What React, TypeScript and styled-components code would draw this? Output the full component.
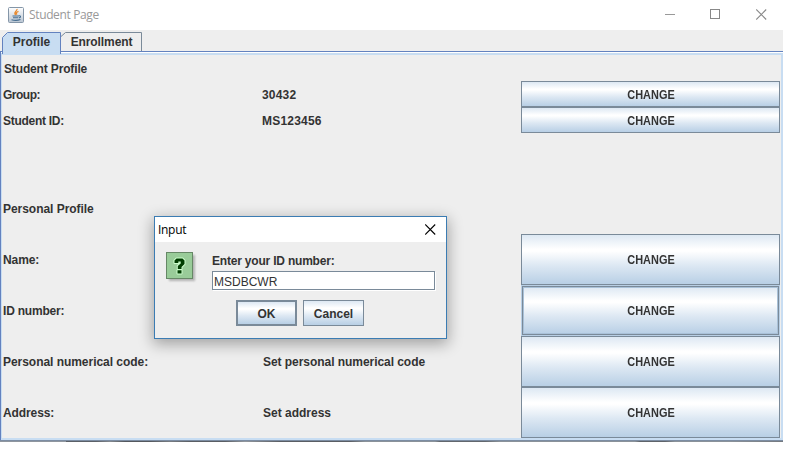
import React from 'react';
import styled, { createGlobalStyle, css } from 'styled-components';

const Global = createGlobalStyle`
  * { box-sizing: border-box; }
  body { margin: 0; background: #fff; overflow: hidden; }
`;

const Frame = styled.div`
  position: relative;
  width: 783px;
  height: 442px;
  display: flex;
  flex-direction: column;
  background: #eee;
  color: #333;
  font: bold 12px/16px "Liberation Sans", Arial, sans-serif;
  white-space: nowrap;
`;

const TitleBar = styled.header`
  height: 30px;
  flex: none;
  display: flex;
  align-items: center;
  padding: 0 16px 0 8px;
  background: #fff;
`;

const WindowTitle = styled.span`
  flex: 1;
  margin-left: 5px;
  color: #999;
  font: 12px/16px "Open Sans", "Noto Sans", sans-serif;
  letter-spacing: -0.36px;
`;

const WindowControls = styled.div`
  display: flex;
  gap: 35px;
  margin-top: -2px;
`;

const TabStrip = styled.nav`
  height: 21px;
  flex: none;
  display: flex;
  align-items: flex-end;
  padding-left: 2px;
`;

const TabBox = styled.div<{ $width: number }>`
  position: relative;
  width: ${p => p.$width}px;
  height: 20px;
  padding-top: 2px;
  text-align: center;
  line-height: 18px;
`;

const TabShape = styled.svg`
  position: absolute;
  left: 0;
  top: 0;
`;

const Label = styled.span<{ $track?: number }>`
  position: relative;
  letter-spacing: ${p => p.$track ?? 0}px;
`;

const CondensedLabel = styled.span`
  display: inline-block;
  transform: scaleX(0.91);
`;

const Panel = styled.main`
  height: 389px;
  flex: none;
  padding: 1px 0 0;
  border-top: 1px solid #6382bf;
  border-left: 1px solid #6382bf;
  background: #fff;
`;

const BottomEdge = styled.div`
  height: 2px;
  flex: none;
  border-top: 1px solid #7c8da3;
  background: linear-gradient(90deg, #8f969e 0 66px, #5b6067 66px 96px, #83888e 110px, #54585e 125px 150px,
    #777c82 170px, #5a5e64 190px 225px, #92979d 245px, #5a5e64 280px 350px, #8b9299 365px 435px,
    #62676d 440px 485px, #8b9299 500px 635px, #5f646a 640px 665px, #8b9299 675px 730px, #74797f 783px);
`;

const PanelBody = styled.div`
  height: 387px;
  padding: 0 1px 0 0;
  border: 2px solid #c8ddf2;
  border-left-width: 1px;
  background: #eee;
`;

const Rows = styled.div<{ $height: number }>`
  display: grid;
  grid-template-columns: 260px 259px 259px;
  grid-auto-rows: ${p => p.$height}px;
  align-items: center;
`;

const Spacer = styled.div`
  height: 50px;
`;

const Cell = styled.div<{ $indent?: number }>`
  padding-left: ${p => p.$indent ?? 1}px;
  padding-top: 1px;
`;

const metal = css`
  border: 1px solid #7a8a99;
  background: linear-gradient(#dde8f3 0%, #fff 29%, #fff 33%, #dde8f3 62%, #b8cfe5 100%);
`;

const ChangeButton = styled.button<{ $focused?: boolean }>`
  ${metal}
  width: 259px;
  height: 100%;
  padding: 1px 0 0 1px;
  color: #333;
  font: inherit;
  ${p => p.$focused && css`
    border-width: 2px;
    outline: 1px solid #b8cfe5;
    outline-offset: -1px;
    box-shadow: inset 0 0 0 1px #a9c1d8;
  `}
`;

const Dialog = styled.section`
  position: absolute;
  left: 154px;
  top: 216px;
  width: 293px;
  height: 123px;
  border: 1px solid #3b7cb3;
  background: #eee;
  box-shadow: 0 4px 14px 1px rgba(0, 0, 0, 0.33);
`;

const DialogTitle = styled.header`
  height: 25px;
  display: flex;
  align-items: center;
  justify-content: space-between;
  padding: 0 10px 0 3px;
  background: #fff;
  color: #000;
  font: 12px/16px "Open Sans", "Noto Sans", sans-serif;
  letter-spacing: -0.3px;
`;

const DialogMain = styled.div`
  display: grid;
  grid-template-columns: 46px 224px;
  padding: 10px 0 0 11px;
  height: 58px;
`;

const Prompt = styled.div`
  display: flex;
  flex-direction: column;
  gap: 2px;
  padding-top: 1px;
`;

const Field = styled.input`
  width: 223px;
  height: 19px;
  padding: 2px 0 0 1px;
  border: 1px solid #7a8a99;
  border-radius: 0;
  background: #fff;
  box-shadow: 1px 1px 0 #fff;
  color: #333;
  font: 12px "Liberation Sans", Arial, sans-serif;
  outline: none;
`;

const Actions = styled.footer`
  display: flex;
  gap: 6px;
  padding-left: 81px;
`;

const DialogButton = styled.button<{ $primary?: boolean }>`
  ${metal}
  border-width: ${p => (p.$primary ? 2 : 1)}px;
  width: 61px;
  height: 26px;
  padding: 1px 0 0;
  color: #333;
  font: inherit;
`;

const JavaIcon = () => (
  <svg width="16" height="16" viewBox="0 0 16 16">
    <defs>
      <linearGradient id="jbg" x1="0" y1="0" x2="0" y2="1">
        <stop offset="0" stopColor="#fff" />
        <stop offset="1" stopColor="#b9c5d2" />
      </linearGradient>
    </defs>
    <rect x="0.5" y="0.5" width="15" height="15" rx="1" fill="url(#jbg)" stroke="#8496a8" />
    <path d="M9 2C9.500 4.200 5 4.800 7.600 8M10.500 4.300C8 5.300 8 6.200 8.900 7.700" fill="none" stroke="#e8892c" strokeWidth="1.300" />
    <path d="M4.500 9h6.300M5 10.700h5.300M10.700 8.800c2.600-.5 2.100 1.900.2 2.200M3.500 12.700c3 .9 6 .9 9-.2" fill="none" stroke="#456d90" strokeWidth="1.100" />
  </svg>
);

const CloseIcon = ({ color }: { color: string }) => (
  <svg width="11" height="11" viewBox="0 0 11 11">
    <path d="M.2.5l10 10M10.200.5l-10 10" stroke={color} strokeWidth="1.100" />
  </svg>
);

const QuestionIcon = () => (
  <svg width="32" height="32" viewBox="0 0 32 32">
    <defs>
      <filter id="soft"><feGaussianBlur stdDeviation="1" /></filter>
    </defs>
    <rect x="3" y="3" width="26" height="26" fill="#999" opacity=".7" filter="url(#soft)" />
    <rect x=".5" y=".5" width="26" height="26" fill="#99cc99" stroke="#668866" />
    <path
      d="M8.500 11V8.500L10.500 6.500H16.500L18.500 8.500V12L15.500 15V17H11.800V14L14.700 11.500V9.500H12.300V11ZM11.500 18.300H15.500V21.500H11.500Z"
      fill="none" stroke="#ccffcc" strokeWidth="2" strokeLinejoin="round"
    />
    <path
      d="M8.500 11V8.500L10.500 6.500H16.500L18.500 8.500V12L15.500 15V17H11.800V14L14.700 11.500V9.500H12.300V11ZM11.500 18.300H15.500V21.500H11.500Z"
      fill="#003d00"
    />
  </svg>
);

type Entry = { name: string; value?: string; track?: number; valueTrack?: number; focused?: boolean };

const account: Entry[] = [
  { name: 'Group:', value: '30432', track: -0.5, valueTrack: 0.2 },
  { name: 'Student ID:', value: 'MS123456', track: -0.28, valueTrack: 0.2 },
];

const personal: Entry[] = [
  { name: 'Name:', track: -0.1 },
  { name: 'ID number:', focused: true, track: -0.2 },
  { name: 'Personal numerical code:', value: 'Set personal numerical code', track: -0.04, valueTrack: -0.05 },
  { name: 'Address:', value: 'Set address', track: -0.1 },
];

const EntryRow = ({ entry, valueIndent }: { entry: Entry; valueIndent?: number }) => (
  <>
    <Cell><Label $track={entry.track}>{entry.name}</Label></Cell>
    <Cell $indent={valueIndent}><Label $track={entry.valueTrack}>{entry.value}</Label></Cell>
    <ChangeButton $focused={entry.focused}><CondensedLabel>CHANGE</CondensedLabel></ChangeButton>
  </>
);

export default function App() {
  return (
    <>
      <Global />
      <Frame>
        <TitleBar>
          <JavaIcon />
          <WindowTitle>Student Page</WindowTitle>
          <WindowControls>
            <svg width="10" height="11"><path d="M0 5.500h10" stroke="#999" /></svg>
            <svg width="11" height="11"><rect x=".5" y=".5" width="9" height="9" fill="none" stroke="#888" /></svg>
            <CloseIcon color="#888" />
          </WindowControls>
        </TitleBar>
        <TabStrip>
          <TabBox $width={59}>
            <TabShape width="59" height="23">
              <path d="M.5 23V6.500L5.500 1.500H58.500V23" fill="#c8ddf2" stroke="#6382bf" />
            </TabShape>
            <Label>Profile</Label>
          </TabBox>
          <TabBox $width={81}>
            <TabShape width="81" height="20">
              <path d="M0 5.500L4.500 1.500H80.500V20" fill="none" stroke="#7a8a99" />
            </TabShape>
            <Label $track={-0.1}>Enrollment</Label>
          </TabBox>
        </TabStrip>
        <Panel>
          <PanelBody>
            <Rows $height={26}>
              <Cell $indent={2}><Label $track={-0.15}>Student Profile</Label></Cell><i /><i />
              {account.map(e => <EntryRow key={e.name} entry={e} valueIndent={0} />)}
            </Rows>
            <Spacer />
            <Rows $height={51}>
              <Cell><Label $track={-0.04}>Personal Profile</Label></Cell><i /><i />
              {personal.map(e => <EntryRow key={e.name} entry={e} />)}
            </Rows>
          </PanelBody>
        </Panel>
        <BottomEdge />
        <Dialog>
          <DialogTitle>Input<CloseIcon color="#000" /></DialogTitle>
          <DialogMain>
            <QuestionIcon />
            <Prompt>
              <Label $track={-0.2}>Enter your ID number:</Label>
              <Field defaultValue="MSDBCWR" />
            </Prompt>
          </DialogMain>
          <Actions>
            <DialogButton $primary><Label>OK</Label></DialogButton>
            <DialogButton><Label>Cancel</Label></DialogButton>
          </Actions>
        </Dialog>
      </Frame>
    </>
  );
}
